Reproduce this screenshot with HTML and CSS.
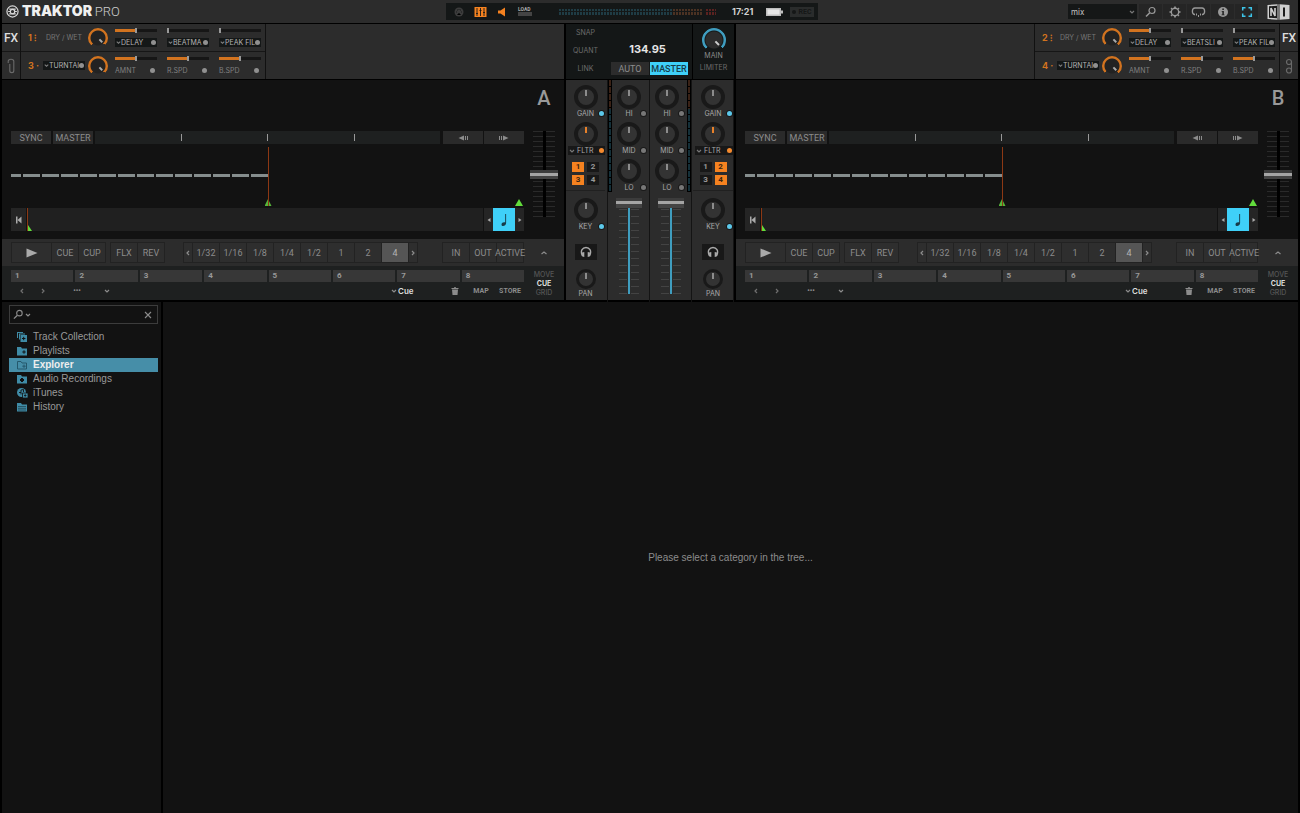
FILE: index.html
```html
<!DOCTYPE html>
<html lang="en">
<head>
  <meta charset="UTF-8">
  <meta name="viewport" content="width=device-width, initial-scale=1.0">
  <title>Traktor Pro</title>
  <link rel="stylesheet" href="styles.css">
</head>
<body>

  <!-- icon sprite -->
  <svg class="sprite" aria-hidden="true">
    <symbol id="i-down" viewBox="0 0 8 8"><path d="M2 3l2 2 2-2" fill="none" stroke="currentColor" stroke-width="1.2"/></symbol>
    <symbol id="i-up" viewBox="0 0 8 8"><path d="M1.500 5L4 3l2.500 2" fill="none" stroke="currentColor" stroke-width="1.200"/></symbol>
    <symbol id="i-left" viewBox="0 0 8 8"><path d="M5 2L3 4l2 2" fill="none" stroke="currentColor" stroke-width="1.200"/></symbol>
    <symbol id="i-right" viewBox="0 0 8 8"><path d="M3 2l2 2-2 2" fill="none" stroke="currentColor" stroke-width="1.200"/></symbol>
    <symbol id="i-tleft" viewBox="0 0 8 8"><path d="M5.500 2v4L2.500 4z" fill="currentColor"/></symbol>
    <symbol id="i-tright" viewBox="0 0 8 8"><path d="M2.500 2v4l3-2z" fill="currentColor"/></symbol>
    <symbol id="i-play" viewBox="0 0 12 10"><path d="M.5.500v9l11-4.500z" fill="currentColor"/></symbol>
    <symbol id="i-back" viewBox="0 0 10 6"><path d="M6 .5v5L.5 3zM7 1h1v4H7zM9 1h1v4H9z" fill="currentColor"/></symbol>
    <symbol id="i-fwd" viewBox="0 0 10 6"><path d="M4 .5v5L9.500 3zM2 1h1v4H2zM0 1h1v4H0z" fill="currentColor"/></symbol>
    <symbol id="i-start" viewBox="0 0 8 8"><path d="M1 .5h1.500V4L6.500.500v7L2.500 4v3.500H1z" fill="currentColor"/></symbol>
    <symbol id="i-note" viewBox="0 0 8 12"><path d="M5.200 0h.9v9c0 3-4.600 4-4.600 1.400C1.500 8.500 4 7.800 5.200 8.500z" fill="currentColor"/></symbol>
    <symbol id="i-trash" viewBox="0 0 8 8"><path d="M.5 1H3V.3h2V1h2.500v1h-7zM1 2.600h6L6.500 8h-5z" fill="currentColor"/></symbol>
    <symbol id="i-phones" viewBox="0 0 12 12"><path d="M2.600 10C-.5 4.500 3 1.500 6 1.500s6.500 3 3.400 8.500" fill="none" stroke="currentColor" stroke-width="1.400"/><path d="M2 6.500l2.300-.5v5l-2-.5zM10 6.500L7.700 6v5l2-.5z" fill="currentColor"/></symbol>
    <symbol id="i-search" viewBox="0 0 12 12"><circle cx="7" cy="4.500" r="3" fill="none" stroke="currentColor" stroke-width="1.200"/><path d="M4.800 6.700L1 10.500" stroke="currentColor" stroke-width="1.500"/></symbol>
    <symbol id="i-gear" viewBox="0 0 12 12"><circle cx="6" cy="6" r="3.700" fill="none" stroke="currentColor" stroke-width="1.400"/><g stroke="currentColor" stroke-width="1.700"><path d="M6 .5V2M6 10v1.500M.5 6H2M10 6h1.500M2.100 2.100l1 1M8.900 8.900l1 1M2.100 9.900l1-1M8.900 3.100l1-1"/></g></symbol>
    <symbol id="i-cruise" viewBox="0 0 14 12"><path d="M3.500 8.500H3C0 8 .2 2 3.500 2h7c3.300 0 3.500 6 .5 6.500h-.5" fill="none" stroke="currentColor" stroke-width="1.300"/><path d="M4.500 7.500h1v2h-1zM6.500 9h1v2h-1zM8.500 7.500h1v2h-1z" fill="currentColor"/></symbol>
    <symbol id="i-info" viewBox="0 0 12 12"><circle cx="6" cy="6" r="5" fill="currentColor"/><path d="M5.300 2.500h1.600v1.500H5.300zM4.700 5h2.200v3.500h.6v.8h-3v-.8h.8V5.800h-.6z" fill="#252525"/></symbol>
    <symbol id="i-full" viewBox="0 0 12 12"><path d="M1.700 4.500V1.700h2.800M7.500 1.700h2.800v2.800M10.300 7.500v2.800H7.500M4.500 10.300H1.700V7.500" fill="none" stroke="currentColor" stroke-width="1.500"/></symbol>
    <symbol id="i-clip" viewBox="0 0 8 16"><path d="M1.200 5V3.300c0-2.800 5.600-2.800 5.600 0v9.400c0 2.600-4 2.600-4 0V6" fill="none" stroke="currentColor" stroke-width="1.100"/></symbol>
    <symbol id="i-chain" viewBox="0 0 8 16"><circle cx="4" cy="4" r="2.500" fill="none" stroke="currentColor" stroke-width="1.200"/><circle cx="4" cy="12.500" r="2.500" fill="none" stroke="currentColor" stroke-width="1.200"/><path d="M6.500 4v8.500" stroke="currentColor" stroke-width="1.100"/></symbol>
    <symbol id="i-folder" viewBox="0 0 12 10"><path d="M1 1h4l1 1.500h5V9.500H1z" fill="currentColor"/></symbol>
  </svg>

  <header class="topbar">
    <div class="brand">
      <svg class="brand-mark" viewBox="0 0 14 14"><circle cx="7" cy="7" r="6" fill="none" stroke="#d8d8d8" stroke-width="1.300"/><circle cx="7" cy="7" r="2.400" fill="none" stroke="#d8d8d8" stroke-width="1.300"/><path d="M3.500 4.500h7M3.500 9.500h7M2.300 7h2.300M9.400 7h2.300" stroke="#d8d8d8" stroke-width="1.200"/></svg>
      <h1>TRAKTOR <span>PRO</span></h1>
    </div>

    <div class="status">
      <svg class="st-midi" viewBox="0 0 10 10"><circle cx="5" cy="5" r="4.500" fill="#3c3c3c"/><path d="M2 5h1M3 3h1M6 3h1M7 5h1M5 2v1M3 8l2-2 2 2" stroke="#181a1a"/></svg>
      <svg class="st-mixer" viewBox="0 0 12 10"><path d="M0 0h12v10H0z" fill="#f58220"/><path d="M2.500 1v8M6 1v8M9.500 1v8M1.500 6.500h2M5 3.500h2M8.500 5.500h2" stroke="#15181a" stroke-width=".9"/></svg>
      <svg class="st-speaker" viewBox="0 0 10 10"><path d="M1 3.500h2.500L8 .5v9L3.500 6.500H1z" fill="#f58220"/></svg>
      <div class="st-load"><span>LOAD</span><i></i></div>
      <div class="st-level"></div>
      <time>17:21</time>
      <svg class="st-battery" viewBox="0 0 17 8"><path d="M0 0h15v2.500h2v3h-2V8H0z" fill="#bdbdbd"/><path d="M1.500 1.500h12v5h-12z" fill="#e6e6e6"/></svg>
      <button class="st-rec"><i></i>REC</button>
    </div>

    <div class="tools">
      <div class="layout-pick">
        <select aria-label="Layout"><option>mix</option></select>
        <svg><use href="#i-down"/></svg>
      </div>
      <div class="tool-group">
        <button aria-label="Maximize browser"><svg><use href="#i-search"/></svg></button>
        <button aria-label="Preferences"><svg><use href="#i-gear"/></svg></button>
        <button aria-label="Cruise"><svg class="wide"><use href="#i-cruise"/></svg></button>
        <button aria-label="Info"><svg><use href="#i-info"/></svg></button>
        <button class="on" aria-label="Fullscreen"><svg><use href="#i-full"/></svg></button>
      </div>
      <svg class="ni" viewBox="0 0 22 16"><path d="M0 1l10-.8v15.600L0 15zM12 .2l10 .8v14l-10 .8z" fill="#d0d0d0"/><path d="M1.500 2.200l8-.4v12.400l-8-.4z" fill="#1c1c1c"/><path d="M3.500 12V4l4 8V4" fill="none" stroke="#d0d0d0" stroke-width="1.600"/><path d="M16.500 3.500v9" stroke="#1c1c1c" stroke-width="2"/><path d="M10 .2h2v15.600h-2z" fill="#777"/></svg>
    </div>
  </header>

  <main class="rig">

    <!-- FX, left side -->
    <section class="fx">
      <div class="fx-tabs">
        <button class="on">FX</button>
        <button aria-label="Linked pads"><svg><use href="#i-clip"/></svg></button>
      </div>
      <div class="fx-units">
        <div class="fx-unit">
          <b>1 <i>⁝</i></b>
          <span class="drywet">DRY / WET</span>
          <input type="range" class="knob ring" aria-label="Unit 1 dry wet">
          <div class="param"><input type="range" class="half" value="50" aria-label="Delay"><div class="pick"><svg><use href="#i-down"/></svg><select aria-label="Effect 1"><option>DELAY</option></select><button class="dot" aria-label="On"></button></div></div>
          <div class="param"><input type="range" class="zero" value="0" aria-label="Beatmasher"><div class="pick"><svg><use href="#i-down"/></svg><select aria-label="Effect 2"><option>BEATMA</option></select><button class="dot" aria-label="On"></button></div></div>
          <div class="param"><input type="range" class="zero" value="0" aria-label="Peak filter"><div class="pick"><svg><use href="#i-down"/></svg><select aria-label="Effect 3"><option>PEAK FIL</option></select><button class="dot" aria-label="On"></button></div></div>
        </div>
        <div class="fx-unit">
          <b>3 <i>·</i></b>
          <div class="pick"><svg><use href="#i-down"/></svg><select aria-label="Unit 3 effect"><option>TURNTAI</option></select><button class="dot" aria-label="On"></button></div>
          <input type="range" class="knob ring" aria-label="Unit 3 dry wet">
          <div class="param"><input type="range" class="half" value="50" aria-label="Amount"><div class="plain"><span>AMNT</span><button class="dot" aria-label="On"></button></div></div>
          <div class="param"><input type="range" class="half" value="50" aria-label="Rotate speed"><div class="plain"><span>R.SPD</span><button class="dot" aria-label="On"></button></div></div>
          <div class="param"><input type="range" class="half" value="50" aria-label="Brake speed"><div class="plain"><span>B.SPD</span><button class="dot" aria-label="On"></button></div></div>
        </div>
      </div>
    </section>

    <!-- master clock -->
    <section class="master">
      <div class="clock-opts">
        <button>SNAP</button>
        <button>QUANT</button>
        <button>LINK</button>
      </div>
      <div class="clock">
        <output>134.95</output>
        <div class="clock-mode">
          <button>AUTO</button>
          <button class="on">MASTER</button>
        </div>
      </div>
      <div class="main-out">
        <input type="range" id="main" class="knob ring blue">
        <label for="main">MAIN</label>
        <button>LIMITER</button>
      </div>
    </section>

    <!-- FX, right side -->
    <section class="fx fx-right">
      <div class="fx-units">
        <div class="fx-unit">
          <b>2 <i>⁝</i></b>
          <span class="drywet">DRY / WET</span>
          <input type="range" class="knob ring" aria-label="Unit 2 dry wet">
          <div class="param"><input type="range" class="half" value="50" aria-label="Delay"><div class="pick"><svg><use href="#i-down"/></svg><select aria-label="Effect 1"><option>DELAY</option></select><button class="dot" aria-label="On"></button></div></div>
          <div class="param"><input type="range" class="zero" value="0" aria-label="Beatslicer"><div class="pick"><svg><use href="#i-down"/></svg><select aria-label="Effect 2"><option>BEATSLI</option></select><button class="dot" aria-label="On"></button></div></div>
          <div class="param"><input type="range" class="zero" value="0" aria-label="Peak filter"><div class="pick"><svg><use href="#i-down"/></svg><select aria-label="Effect 3"><option>PEAK FIL</option></select><button class="dot" aria-label="On"></button></div></div>
        </div>
        <div class="fx-unit">
          <b>4 <i>·</i></b>
          <div class="pick"><svg><use href="#i-down"/></svg><select aria-label="Unit 4 effect"><option>TURNTAI</option></select><button class="dot" aria-label="On"></button></div>
          <input type="range" class="knob ring" aria-label="Unit 4 dry wet">
          <div class="param"><input type="range" class="half" value="50" aria-label="Amount"><div class="plain"><span>AMNT</span><button class="dot" aria-label="On"></button></div></div>
          <div class="param"><input type="range" class="half" value="50" aria-label="Rotate speed"><div class="plain"><span>R.SPD</span><button class="dot" aria-label="On"></button></div></div>
          <div class="param"><input type="range" class="half" value="50" aria-label="Brake speed"><div class="plain"><span>B.SPD</span><button class="dot" aria-label="On"></button></div></div>
        </div>
      </div>
      <div class="fx-tabs">
        <button class="on">FX</button>
        <button aria-label="Chained effects"><svg><use href="#i-chain"/></svg></button>
      </div>
    </section>

    <!-- deck A -->
    <section class="deck">
      <div class="deck-top">
        <div class="deck-main">
          <div class="phase">
            <button>SYNC</button>
            <button>MASTER</button>
            <div class="phase-meter"><i></i><i></i><i></i></div>
            <button class="bend" aria-label="Tempo bend down"><svg class="nudge"><use href="#i-back"/></svg></button>
            <button class="bend" aria-label="Tempo bend up"><svg class="nudge"><use href="#i-fwd"/></svg></button>
          </div>
          <div class="wave"><div class="beats"></div><div class="mark"></div><div class="playhead"></div><div class="mark end"></div></div>
          <div class="stripe">
            <button aria-label="To start"><svg><use href="#i-start"/></svg></button>
            <div class="overview"><i></i></div>
            <button class="thin" aria-label="Beatjump back"><svg><use href="#i-tleft"/></svg></button>
            <button class="note" aria-label="Key lock"><svg><use href="#i-note"/></svg></button>
            <button class="thin" aria-label="Beatjump forward"><svg><use href="#i-tright"/></svg></button>
          </div>
        </div>
        <div class="deck-side">
          <h2>A</h2>
          <input type="range" class="tempo" aria-label="Deck A tempo">
        </div>
      </div>
      <div class="transport">
        <div class="keys">
          <div class="group"><button class="play" aria-label="Play"><svg><use href="#i-play"/></svg></button><button>CUE</button><button>CUP</button></div>
          <div class="group"><button>FLX</button><button>REV</button></div>
          <div class="group push sizes"><button class="thin" aria-label="Smaller"><svg><use href="#i-left"/></svg></button><button>1/32</button><button>1/16</button><button>1/8</button><button>1/4</button><button>1/2</button><button>1</button><button>2</button><button class="on">4</button><button class="thin" aria-label="Larger"><svg><use href="#i-right"/></svg></button></div>
          <div class="group push"><button>IN</button><button>OUT</button><button>ACTIVE</button></div>
        </div>
        <button class="fold" aria-label="Collapse"><svg><use href="#i-up"/></svg></button>
      </div>
      <div class="cues">
        <div class="cue-main">
          <div class="hotcues"><button>1</button><button>2</button><button>3</button><button>4</button><button>5</button><button>6</button><button>7</button><button>8</button></div>
          <div class="cue-row">
            <button class="step" aria-label="Previous cue"><svg><use href="#i-left"/></svg></button>
            <button class="step" aria-label="Next cue"><svg><use href="#i-right"/></svg></button>
            <button class="cue-name">•••</button>
            <button class="cue-list" aria-label="Cue list"><svg><use href="#i-down"/></svg></button>
            <div class="cue-type"><svg><use href="#i-down"/></svg><select aria-label="Cue type"><option>Cue</option></select></div>
            <button class="trash" aria-label="Delete cue"><svg><use href="#i-trash"/></svg></button>
            <button class="map">MAP</button>
            <button class="store">STORE</button>
          </div>
        </div>
        <div class="pages"><button>MOVE</button><button class="on">CUE</button><button>GRID</button></div>
      </div>
    </section>

    <!-- mixer -->
    <section class="mixer">
      <div class="strip">
        <div class="cell"><input type="range" id="gain-a" class="knob"><label for="gain-a">GAIN</label><i class="led blue"></i></div>
        <div class="cell"><input type="range" id="filter-a" class="knob hot"><label for="filter-a" class="boxed"><svg><use href="#i-down"/></svg>FLTR</label><i class="led orange"></i></div>
        <div class="assign"><button class="on">1</button><button>2</button><button class="on">3</button><button>4</button></div>
        <div class="cell"><input type="range" id="key-a" class="knob"><label for="key-a">KEY</label><i class="led blue"></i></div>
        <button class="phones" aria-label="Monitor A"><svg><use href="#i-phones"/></svg></button>
        <div class="cell"><input type="range" id="pan-a" class="knob small"><label for="pan-a">PAN</label></div>
      </div>
      <div class="channel">
        <div class="eq">
          <div class="meter"></div>
          <div class="bands">
            <div class="cell"><input type="range" id="hi-a" class="knob"><label for="hi-a">HI</label><i class="led"></i></div>
            <div class="cell"><input type="range" id="mid-a" class="knob"><label for="mid-a">MID</label><i class="led"></i></div>
            <div class="cell"><input type="range" id="lo-a" class="knob"><label for="lo-a">LO</label><i class="led"></i></div>
          </div>
        </div>
        <input type="range" class="volume" value="100" aria-label="Channel A volume">
      </div>
      <div class="channel">
        <div class="eq">
          <div class="bands">
            <div class="cell"><input type="range" id="hi-b" class="knob"><label for="hi-b">HI</label><i class="led"></i></div>
            <div class="cell"><input type="range" id="mid-b" class="knob"><label for="mid-b">MID</label><i class="led"></i></div>
            <div class="cell"><input type="range" id="lo-b" class="knob"><label for="lo-b">LO</label><i class="led"></i></div>
          </div>
          <div class="meter"></div>
        </div>
        <input type="range" class="volume" value="100" aria-label="Channel B volume">
      </div>
      <div class="strip">
        <div class="cell"><input type="range" id="gain-b" class="knob"><label for="gain-b">GAIN</label><i class="led blue"></i></div>
        <div class="cell"><input type="range" id="filter-b" class="knob hot"><label for="filter-b" class="boxed"><svg><use href="#i-down"/></svg>FLTR</label><i class="led orange"></i></div>
        <div class="assign"><button>1</button><button class="on">2</button><button>3</button><button class="on">4</button></div>
        <div class="cell"><input type="range" id="key-b" class="knob"><label for="key-b">KEY</label><i class="led blue"></i></div>
        <button class="phones" aria-label="Monitor B"><svg><use href="#i-phones"/></svg></button>
        <div class="cell"><input type="range" id="pan-b" class="knob small"><label for="pan-b">PAN</label></div>
      </div>
    </section>

    <!-- deck B -->
    <section class="deck">
      <div class="deck-top">
        <div class="deck-main">
          <div class="phase">
            <button>SYNC</button>
            <button>MASTER</button>
            <div class="phase-meter"><i></i><i></i><i></i></div>
            <button class="bend" aria-label="Tempo bend down"><svg class="nudge"><use href="#i-back"/></svg></button>
            <button class="bend" aria-label="Tempo bend up"><svg class="nudge"><use href="#i-fwd"/></svg></button>
          </div>
          <div class="wave"><div class="beats"></div><div class="mark"></div><div class="playhead"></div><div class="mark end"></div></div>
          <div class="stripe">
            <button aria-label="To start"><svg><use href="#i-start"/></svg></button>
            <div class="overview"><i></i></div>
            <button class="thin" aria-label="Beatjump back"><svg><use href="#i-tleft"/></svg></button>
            <button class="note" aria-label="Key lock"><svg><use href="#i-note"/></svg></button>
            <button class="thin" aria-label="Beatjump forward"><svg><use href="#i-tright"/></svg></button>
          </div>
        </div>
        <div class="deck-side">
          <h2>B</h2>
          <input type="range" class="tempo" aria-label="Deck B tempo">
        </div>
      </div>
      <div class="transport">
        <div class="keys">
          <div class="group"><button class="play" aria-label="Play"><svg><use href="#i-play"/></svg></button><button>CUE</button><button>CUP</button></div>
          <div class="group"><button>FLX</button><button>REV</button></div>
          <div class="group push sizes"><button class="thin" aria-label="Smaller"><svg><use href="#i-left"/></svg></button><button>1/32</button><button>1/16</button><button>1/8</button><button>1/4</button><button>1/2</button><button>1</button><button>2</button><button class="on">4</button><button class="thin" aria-label="Larger"><svg><use href="#i-right"/></svg></button></div>
          <div class="group push"><button>IN</button><button>OUT</button><button>ACTIVE</button></div>
        </div>
        <button class="fold" aria-label="Collapse"><svg><use href="#i-up"/></svg></button>
      </div>
      <div class="cues">
        <div class="cue-main">
          <div class="hotcues"><button>1</button><button>2</button><button>3</button><button>4</button><button>5</button><button>6</button><button>7</button><button>8</button></div>
          <div class="cue-row">
            <button class="step" aria-label="Previous cue"><svg><use href="#i-left"/></svg></button>
            <button class="step" aria-label="Next cue"><svg><use href="#i-right"/></svg></button>
            <button class="cue-name">•••</button>
            <button class="cue-list" aria-label="Cue list"><svg><use href="#i-down"/></svg></button>
            <div class="cue-type"><svg><use href="#i-down"/></svg><select aria-label="Cue type"><option>Cue</option></select></div>
            <button class="trash" aria-label="Delete cue"><svg><use href="#i-trash"/></svg></button>
            <button class="map">MAP</button>
            <button class="store">STORE</button>
          </div>
        </div>
        <div class="pages"><button>MOVE</button><button class="on">CUE</button><button>GRID</button></div>
      </div>
    </section>
  </main>

  <div class="browser">
    <nav class="tree">
      <div class="search">
        <svg><use href="#i-search"/></svg>
        <svg class="mini"><use href="#i-down"/></svg>
        <input type="text" aria-label="Search">
        <button aria-label="Clear"><svg class="mini" viewBox="0 0 8 8"><path d="M1 1l6 6M7 1L1 7" stroke="currentColor" stroke-width="1.100"/></svg></button>
      </div>
      <ul>
        <li><a href="#"><svg viewBox="0 0 12 10"><path d="M1 0h6v1H2v5H1zM3 1.500h6v1H4v5H3z" fill="currentColor"/><path d="M4.500 3h6.500v7H4.500z" fill="currentColor"/><path d="M7.700 4.800v3.400M6 6.500h3.400" stroke="#121212"/></svg>Track Collection</a></li>
        <li><a href="#"><svg viewBox="0 0 12 10"><use href="#i-folder"/><path d="M8 4.300v3.400M6.300 6h3.400" stroke="#121212"/></svg>Playlists</a></li>
        <li><a href="#" class="on"><svg viewBox="0 0 12 10"><path d="M1.500 9V1.500H5l1 1.500h4.500V9z" fill="none" stroke="#24586c"/><path d="M8 4.500v3.400M6.300 6.200h3.400" stroke="#24586c"/></svg>Explorer</a></li>
        <li><a href="#"><svg viewBox="0 0 12 10"><use href="#i-folder"/><path d="M6 4v4M4 6h4" stroke="#121212" stroke-width="2"/></svg>Audio Recordings</a></li>
        <li><a href="#"><svg viewBox="0 0 12 10"><circle cx="5.500" cy="4.500" r="4.500" fill="currentColor"/><path d="M5 6.500V2l2.500-.5V4M3 4.500h2" fill="none" stroke="#121212" stroke-width=".9"/><path d="M6.500 5H12v5H6.500z" fill="currentColor" stroke="#121212" stroke-width=".8"/><path d="M9.200 6.200v2.600M8 7.500h2.500" stroke="#121212" stroke-width=".8"/></svg>iTunes</a></li>
        <li><a href="#"><svg viewBox="0 0 12 10"><use href="#i-folder"/><path d="M2 4.500h8M2 6.300h8M2 8h8" stroke="#1c3d49" stroke-width=".7"/></svg>History</a></li>
      </ul>
    </nav>
    <div class="tracks">
      <p>Please select a category in the tree...</p>
    </div>
  </div>

</body>
</html>
```
FILE: styles.css
```css
*{
  margin: 0;
  padding: 0;
  box-sizing: border-box;
}
body{
  display: flex;
  flex-direction: column;
  min-height: 100vh;
  padding: 0 2px;
  background: #000;
  color: #8c8c8c;
  font-family: Roboto, "Liberation Sans", sans-serif;
  font-size: 9px;
  line-height: 10px;
}
button, select, input{
  font: inherit;
  color: inherit;
  background: none;
  border: 0;
  border-radius: 0;
  outline: none;
  appearance: none;
  min-width: 0;
}
button{
  display: flex;
  align-items: center;
  justify-content: center;
  cursor: pointer;
}
svg{
  display: block;
  flex: none;
  width: 8px;
  height: 8px;
}
.sprite{
  position: absolute;
  width: 0;
  height: 0;
}

/* top bar */
.topbar{
  display: grid;
  grid-template-columns: 444fr 372px 480fr;
  align-items: center;
  height: 23px;
  margin-bottom: 1px;
  background: #2c2c2c;
}
.brand{
  display: flex;
  align-items: center;
  gap: 3px;
  padding-left: 4px;
}
.brand-mark{
  width: 13px;
  height: 13px;
}
.brand h1{
  font-family: Inter, sans-serif;
  font-size: 14px;
  font-weight: 900;
  line-height: 16px;
  color: #f0f0f0;
}
.brand h1 span{
  font-family: Roboto, sans-serif;
  font-weight: 300;
  font-size: 13px;
  color: #ccc;
}
.status{
  display: flex;
  align-items: center;
  height: 17px;
  padding: 0 4px 0 8px;
  background: #141717;
}
.st-midi{
  width: 10px;
  height: 10px;
  margin-right: 10px;
}
.st-mixer{
  width: 13px;
  height: 10px;
  margin-right: 10px;
}
.st-speaker{
  width: 10px;
  height: 10px;
  margin-right: 11px;
}
.st-load{
  width: 14px;
  margin-right: 27px;
  font-size: 5px;
  font-weight: 700;
  line-height: 5px;
  color: #aaa;
}
.st-load i{
  display: block;
  height: 4px;
  background: #444;
}
.st-level{
  width: 157px;
  height: 6px;
  margin-right: 16px;
  background:
    repeating-linear-gradient(to right, transparent 0 2px, #141717 2px 3px),
    linear-gradient(#141717, #141717) 0 2px / 100% 1px no-repeat,
    linear-gradient(to right, #1f3c45 0 72%, #4b3223 72% 91%, #7c4720 91% 92%, #141717 92% 93%, #5b2220 93%);
}
.status time{
  font-family: Inter, sans-serif;
  font-size: 9px;
  font-weight: 700;
  color: #d0d0d0;
}
.st-battery{
  width: 17px;
  height: 8px;
  margin-left: auto;
  margin-right: 7px;
}
.st-rec{
  gap: 2px;
  width: 24px;
  height: 10px;
  font-size: 7px;
  font-weight: 700;
  background: #2a2c2c;
  color: #151717;
}
.st-rec i{
  width: 4px;
  height: 4px;
  border-radius: 50%;
  background: #151717;
}
.tools{
  display: flex;
  align-items: center;
  justify-content: flex-end;
  padding-right: 8px;
}
.layout-pick{
  position: relative;
  width: 69px;
  margin-right: 2px;
}
.layout-pick select{
  width: 100%;
  height: 15px;
  padding-left: 3px;
  background: #151717;
  color: #c4c4c4;
  font-family: Inter, sans-serif;
  font-size: 8px;
}
.layout-pick svg{
  position: absolute;
  right: 1px;
  top: 4px;
  color: #777;
}
.tool-group{
  display: flex;
  gap: 1px;
  margin-right: 9px;
}
.tool-group button{
  width: 23px;
  height: 15px;
  background: #252525;
  color: #999;
}
.tool-group svg{
  width: 12px;
  height: 12px;
}
.tool-group .wide{
  width: 15px;
}
.tool-group .on{
  color: #3dc4e8;
}
.tools .ni{
  width: 23px;
  height: 16px;
}

/* decks, mixer and fx */
.rig{
  display: grid;
  grid-template-columns: 1fr 168px 1fr;
  grid-template-rows: 55px 220px;
  column-gap: 2px;
  row-gap: 1px;
}
.fx{
  display: flex;
  background: #2c2c2c;
}
.fx-right{
  justify-content: flex-end;
}
.fx-tabs{
  display: grid;
  grid-template-rows: 1fr 1fr;
  gap: 1px;
  width: 18px;
  background: #161616;
}
.fx-tabs button{
  background: #2c2c2c;
  color: #6a6a6a;
  font-size: 12px;
  font-weight: 500;
}
.fx-tabs .on{
  color: #ddd;
}
.fx-tabs svg{
  width: 8px;
  height: 16px;
}
.fx-units{
  display: grid;
  grid-template-rows: 1fr 1fr;
  gap: 1px;
  background: #161616;
  border: solid #111;
  border-width: 0 1px;
}
.fx-unit{
  display: grid;
  grid-template-columns: 15px 42px 30px 52px 52px 42px;
  align-items: center;
  padding: 0 4px 0 7px;
  background: #2c2c2c;
}
.fx-unit b{
  font-family: Inter, sans-serif;
  font-size: 9px;
  font-weight: 700;
  color: #d2731f;
  white-space: nowrap;
}
.fx-unit b i{
  font-style: normal;
}
.drywet{
  font-family: Inter, sans-serif;
  font-size: 7px;
  text-align: center;
  color: #777;
  white-space: nowrap;
}
.param{
  width: 42px;
}
.param input{
  display: block;
  width: 100%;
  height: 3px;
  margin-bottom: 6px;
  background: #161616;
}
.param .half{
  background: linear-gradient(to right, #d2731f 50%, #161616 50%);
}
.param input::-webkit-slider-thumb{
  appearance: none;
  width: 2px;
  height: 5px;
  background: #999;
}
.pick, .plain{
  display: flex;
  align-items: center;
  height: 9px;
  font-family: Inter, sans-serif;
  font-size: 7px;
  line-height: 9px;
}
.pick{
  background: #141717;
  color: #b4b4b4;
}
.pick svg{
  width: 7px;
  height: 7px;
  margin-right: -1px;
  color: #808080;
}
.pick select{
  flex: 1;
  height: 9px;
  line-height: 9px;
  overflow: hidden;
  text-overflow: clip;
}
.plain{
  justify-content: space-between;
  padding-right: 1px;
  color: #808080;
}
.dot{
  flex: none;
  width: 5px;
  height: 5px;
  margin-right: 1px;
  border-radius: 50%;
  background: #909090;
}

/* knobs: the pointer is drawn straight up and .ring turns it to full */
.knob{
  display: block;
  flex: none;
  width: 24px;
  height: 24px;
  margin: 0 auto;
  border: 4px solid #191919;
  border-radius: 50%;
  background: linear-gradient(#8c8c8c, #8c8c8c) center 1px / 2px 6px no-repeat, #333;
}
.knob::-webkit-slider-thumb{
  appearance: none;
  width: 0;
  height: 0;
}
.knob.hot{
  background: linear-gradient(#e8812a, #e8812a) center 1px / 2px 6px no-repeat, #333;
}
.knob.small{
  width: 20px;
  height: 20px;
  border-width: 3px;
}
.knob.ring{
  width: 20px;
  height: 20px;
  border: 0;
  transform: rotate(135deg);
  background:
    linear-gradient(#aaa, #aaa) center 4px / 2px 4px no-repeat,
    radial-gradient(circle, #222 7px, transparent 8px),
    conic-gradient(#2c2c2c 0 90deg, #d2731f 90deg);
}
.fx-unit .ring{
  margin-left: 3px;
}
.knob.ring.blue{
  width: 24px;
  height: 24px;
  background:
    linear-gradient(#ccc, #ccc) center 5px / 2px 5px no-repeat,
    radial-gradient(circle, #2c2c2c 8px, #141717 9px, transparent 10px),
    conic-gradient(#141717 0 90deg, #3f9dbf 90deg);
}

/* master clock */
.master{
  display: grid;
  grid-template-columns: 42px 1fr 42px;
  background: #141717;
  font-family: Inter, sans-serif;
  font-size: 7px;
}
.clock-opts{
  display: grid;
  grid-template-rows: 1fr 1fr 1fr;
  padding: 0 3px 1px 0;
}
.clock-opts button, .main-out button{
  color: #6c6c6c;
}
.clock{
  display: flex;
  flex-direction: column;
  padding: 18px 4px 4px 3px;
}
.clock output{
  padding-right: 4px;
  font-size: 11px;
  font-weight: 700;
  line-height: 14px;
  text-align: center;
  color: #e4e4e4;
}
.clock-mode{
  display: grid;
  grid-template-columns: 1fr 1fr;
  gap: 1px;
  margin-top: auto;
}
.clock-mode button{
  height: 13px;
  background: #2c2c2c;
  font-family: Roboto, sans-serif;
  font-size: 9px;
}
.clock-mode .on{
  background: #3fd0f8;
  color: #173b48;
  font-weight: 500;
}
.main-out{
  display: flex;
  flex-direction: column;
  align-items: center;
  padding-top: 4px;
  border-left: 1px solid #000;
  line-height: 8px;
}
.main-out button{
  margin-top: 4px;
}

/* deck */
.deck{
  display: flex;
  flex-direction: column;
  background: #121212;
}
.deck-top{
  display: grid;
  grid-template-columns: 1fr 40px;
  height: 159px;
  padding-left: 9px;
}
.deck-main{
  padding-top: 51px;
}
.phase{
  display: flex;
  height: 13px;
}
.phase button{
  width: 40px;
  margin-right: 2px;
  background: #2a2a2a;
}
.phase .bend{
  margin: 0 0 0 1px;
}
.phase-meter{
  display: flex;
  flex: 1;
  align-items: center;
  justify-content: space-evenly;
  margin-right: 2px;
  background: #1e2020;
}
.phase-meter i{
  width: 1px;
  height: 7px;
  background: #999;
}
.phase .nudge{
  width: 10px;
  height: 6px;
}
.wave{
  position: relative;
  height: 59px;
  margin: 3px 0 2px;
  padding-top: 27px;
}
.beats{
  width: 50%;
  height: 3px;
  background: repeating-linear-gradient(to left, #858d8d 0 17px, transparent 17px 19px);
}
.playhead{
  position: absolute;
  top: 0;
  bottom: 0;
  left: 50%;
  width: 1px;
  background: #8c3814;
}
.mark{
  position: absolute;
  bottom: 0;
  left: calc(50% - 3px);
  width: 7px;
  height: 7px;
  background: #56b53a;
  clip-path: polygon(50% 0, 100% 100%, 0 100%);
}
.mark.end{
  left: auto;
  right: 1px;
  width: 8px;
  background: #62dc3c;
}
.stripe{
  display: flex;
  height: 23px;
}
.stripe button{
  width: 15px;
  background: #252525;
  color: #aaa;
}
.stripe .thin{
  width: 9px;
}
.stripe .note{
  width: 22px;
  background: #3fd0f8;
  color: #173b48;
}
.note svg{
  height: 12px;
}
.overview{
  position: relative;
  flex: 1;
  margin: 0 1px;
  background: #202020;
  border-left: 1px solid #8c3814;
}
.overview i{
  position: absolute;
  left: 0;
  bottom: 0;
  width: 4px;
  height: 6px;
  background: #62dc3c;
  clip-path: polygon(0 0, 100% 100%, 0 100%);
}
.deck-side{
  display: flex;
  flex-direction: column;
  align-items: center;
  padding-top: 8px;
}
.deck-side h2{
  margin-bottom: 23px;
  font-size: 20px;
  font-weight: 500;
  line-height: 20px;
  color: #999;
}
.tempo, .volume{
  writing-mode: vertical-lr;
  direction: rtl;
}
.tempo{
  width: 28px;
  height: 86px;
  background:
    linear-gradient(#000, #000) center / 3px 100% no-repeat,
    repeating-linear-gradient(#2a2a2a 0 1px, transparent 1px 5px) center / 22px 100% no-repeat;
}
.tempo::-webkit-slider-thumb, .volume::-webkit-slider-thumb{
  appearance: none;
  width: 28px;
  height: 9px;
  background: linear-gradient(#3c3c3c 0 3px, #a4a4a4 3px 6px, #444 6px);
}
.transport{
  display: flex;
  align-items: center;
  height: 27px;
  padding-left: 9px;
  background: #2c2c2c;
}
.keys{
  display: flex;
  flex: 1;
}
.group{
  display: flex;
  gap: 1px;
  height: 21px;
  margin-right: 4px;
  padding: 1px;
  background: #222;
}
.sizes{
  margin-right: 10px;
}
.group:last-child{
  margin-right: 0;
}
.push{
  margin-left: auto;
}
.group button{
  width: 26px;
  background: #2e2e2e;
}
.group .play{
  width: 39px;
  color: #aaa;
}
.play svg{
  width: 12px;
  height: 10px;
}
.group .thin{
  width: 8px;
}
.group .on{
  background: #555;
  color: #b4b4b4;
}
.fold{
  width: 40px;
}
.cues{
  display: grid;
  grid-template-columns: 1fr 40px;
  flex: 1;
  padding: 4px 0 0 9px;
  background: #1e2020;
  font-size: 7px;
  font-weight: 700;
}
.hotcues{
  display: grid;
  grid-template-columns: repeat(8, 1fr);
  gap: 2px;
}
.hotcues button{
  justify-content: flex-start;
  height: 12px;
  padding-left: 4px;
  background: #373737;
  color: #999;
  font-size: 8px;
  font-weight: 700;
}
.cue-row{
  display: flex;
  align-items: center;
  height: 18px;
}
.cue-row .step{
  width: 21px;
  color: #707070;
}
.cue-row .cue-name{
  width: 48px;
}
.cue-row .cue-list{
  width: 12px;
}
.cue-type{
  display: flex;
  align-items: center;
  margin: 0 30px 0 auto;
  color: #ddd;
  font-family: Inter, sans-serif;
  font-size: 8px;
  font-weight: 600;
}
.cue-type svg{
  color: #8c8c8c;
}
.cue-row .trash{
  width: 22px;
}
.cue-row .map{
  width: 30px;
}
.cue-row .store{
  width: 28px;
}
.pages{
  display: flex;
  flex-direction: column;
  font-family: Inter, sans-serif;
  font-weight: 500;
}
.pages button{
  height: 9px;
  color: #555;
}
.pages .on{
  color: #ddd;
  font-weight: 700;
}

/* mixer */
.mixer{
  display: grid;
  grid-template-columns: repeat(4, 42px);
  background: #2c2c2c;
}
.strip, .channel{
  border-right: 1px solid #141414;
}
.strip{
  padding: 5px 2px 0 0;
}
.strip:last-child{
  padding: 5px 0 0 1px;
}
.cell{
  position: relative;
  height: 37px;
  font-family: Inter, sans-serif;
  font-size: 7px;
  line-height: 9px;
  text-align: center;
  color: #a8a8a8;
}
.cell label{
  display: block;
}
.cell .boxed{
  display: flex;
  align-items: center;
  margin: 0 0 0 2px;
  background: #181818;
}
.boxed svg{
  margin-right: 1px;
  color: #777;
}
.led{
  position: absolute;
  right: 1px;
  bottom: 6px;
  width: 5px;
  height: 5px;
  border-radius: 50%;
  background: #777;
  box-shadow: 0 0 0 1px #1a1a1a;
}
.led.blue{
  background: #5cc8ea;
}
.led.orange{
  background: #f58a2e;
}
.assign{
  display: grid;
  grid-template-columns: 12px 12px;
  gap: 3px;
  height: 32px;
  margin-bottom: 7px;
  padding: 3px 0 6px;
  justify-content: center;
  border-bottom: 1px solid #202020;
}
.assign button{
  background: #181818;
  color: #999;
  font-size: 8px;
  font-weight: 700;
}
.assign .on{
  background: #f58220;
  color: #3a2410;
}
.phones{
  width: 22px;
  height: 16px;
  margin: 9px auto;
  background: #181818;
  color: #aaa;
}
.phones svg{
  width: 12px;
  height: 12px;
}
.eq{
  display: flex;
  height: 112px;
  margin-bottom: 6px;
}
.bands{
  flex: 1;
  padding: 5px 3px 0 0;
}
.bands .led{
  right: 0;
}
.meter{
  width: 4px;
  border: solid #000;
  border-width: 0 1px;
  background:
    repeating-linear-gradient(transparent 0 6px, #000 6px 7px),
    linear-gradient(#3a2216 0 26%, #143039 26%);
}
.volume{
  display: block;
  width: 26px;
  height: 96px;
  margin: 0 auto;
  background:
    linear-gradient(#3f9dbf, #3f9dbf) center bottom / 2px 86px no-repeat,
    linear-gradient(#2c2c2c, #2c2c2c) center / 4px 100% no-repeat,
    repeating-linear-gradient(to top, #434343 0 1px, transparent 1px 7px) center / 20px 100% no-repeat;
}
.volume::-webkit-slider-thumb{
  width: 26px;
  height: 10px;
}

/* browser */
.browser{
  display: flex;
  flex: 1;
  gap: 2px;
  margin-top: 2px;
  font-family: "Liberation Sans", sans-serif;
  font-size: 10px;
}
.tree{
  width: 159px;
  padding: 3px 3px 0 7px;
  background: #121212;
}
.search{
  display: flex;
  align-items: center;
  height: 19px;
  padding: 0 5px 0 3px;
  border: 1px solid #3c3c3c;
}
.search svg{
  width: 11px;
  height: 11px;
}
.search .mini{
  width: 8px;
  height: 8px;
}
.search input{
  flex: 1;
}
.tree ul{
  margin-top: 6px;
  list-style: none;
}
.tree a{
  display: flex;
  align-items: center;
  height: 14px;
  padding-left: 7px;
  color: #999;
  text-decoration: none;
}
.tree a svg{
  width: 12px;
  height: 10px;
  margin-right: 5px;
  color: #3f8ba6;
}
.tree .on{
  background: #468ea8;
  color: #eee;
  font-weight: 700;
}
.tracks{
  display: flex;
  flex: 1;
  align-items: center;
  justify-content: center;
  background: #121212;
}
```
